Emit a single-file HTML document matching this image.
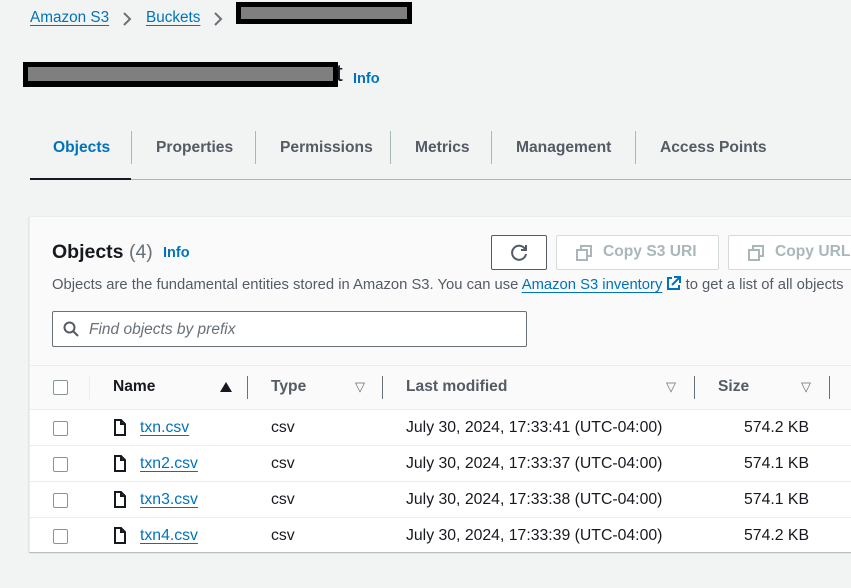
<!DOCTYPE html>
<html><head><meta charset="utf-8"><style>
*{margin:0;padding:0;box-sizing:border-box}
body{width:851px;height:588px;overflow:hidden;background:#f2f3f3;font-family:"Liberation Sans",sans-serif;color:#16191f;position:relative}
.a{position:absolute;white-space:nowrap}
.link{color:#0073bb;text-decoration:underline;text-underline-offset:3px}
.tab{position:absolute;top:139px;font-size:15.6px;font-weight:bold;color:#545b64}
.sep{position:absolute;top:131px;width:1px;height:33px;background:#aab7b8}
.cb{position:absolute;left:53px;width:15px;height:15px;border:1px solid #879596;border-radius:2px;background:#fff}
.row{position:absolute;left:30px;width:821px;height:36px;border-top:1px solid #eaeded;background:#fff;font-size:15.8px}
.row span{position:absolute;top:9px}
.hs{position:absolute;top:376px;width:1px;height:23px;background:#687078}
.tri{position:absolute;top:382px;width:0;height:0;border-left:6px solid transparent;border-right:6px solid transparent}
.btn{position:absolute;top:235px;height:35px;border:1px solid #d5dbdb;border-radius:2px;background:#fff;color:#aab7b8;font-weight:bold;font-size:15.6px}
.hd{position:absolute;top:378px;font-size:15.6px;font-weight:bold;color:#545b64}
</style></head><body>
<div class="a link" style="left:30px;top:9px;font-size:15.3px">Amazon S3</div>
<svg class="a" style="left:121px;top:11px" width="12" height="16"><path d="M3 2L9 8L3 14" fill="none" stroke="#687078" stroke-width="2"/></svg>
<div class="a link" style="left:146px;top:9px;font-size:15.3px">Buckets</div>
<svg class="a" style="left:212px;top:11px" width="12" height="16"><path d="M3 2L9 8L3 14" fill="none" stroke="#687078" stroke-width="2"/></svg>
<div class="a" style="left:236px;top:2px;width:176px;height:22px;background:#000"><div style="margin:5px;height:12px;background:#7f7f80"></div></div>
<div class="a" style="left:23px;top:62px;width:315px;height:25px;background:#000"><div style="margin:5px;height:14px;background:#7f7f80"></div></div>
<div class="a" style="left:336px;top:60px;font-size:24px">t</div>
<div class="a" style="left:353px;top:71px;font-size:14.5px;font-weight:bold;color:#0073bb">Info</div>

<div class="tab" style="left:53px;color:#0073bb">Objects</div>
<div class="tab" style="left:156px">Properties</div>
<div class="tab" style="left:280px">Permissions</div>
<div class="tab" style="left:415px">Metrics</div>
<div class="tab" style="left:516px">Management</div>
<div class="tab" style="left:660px">Access Points</div>
<div class="sep" style="left:131px"></div><div class="sep" style="left:255px"></div><div class="sep" style="left:390px"></div><div class="sep" style="left:491px"></div><div class="sep" style="left:635px"></div>
<div class="a" style="left:30px;top:179px;width:821px;height:1px;background:#aab7b8"></div>
<div class="a" style="left:30px;top:178px;width:101px;height:2px;background:#16191f"></div>

<div class="a" style="left:29px;top:216px;width:830px;height:336px;background:#fafafa;border:1px solid #eaeded;box-shadow:0 1px 1px #aab7b8"></div>
<div class="a" style="left:52px;top:241px;font-size:19.5px;font-weight:bold">Objects <span style="font-weight:normal;color:#687078">(4)</span></div>
<div class="a" style="left:163px;top:245px;font-size:14.5px;font-weight:bold;color:#0073bb">Info</div>
<div class="a" style="left:491px;top:235px;width:56px;height:35px;border:1px solid #545b64;border-radius:2px;background:#fff">
<svg width="54" height="33" viewBox="0 0 54 33"><path d="M33 13 A7 7 0 1 0 34 18" fill="none" stroke="#545b64" stroke-width="2"/><path d="M34 9 V14 H29" fill="none" stroke="#545b64" stroke-width="2"/></svg></div>
<div class="btn" style="left:556px;width:163px"><svg class="a" style="left:19px;top:9px" width="16" height="16"><rect x="5" y="1" width="10" height="10" fill="none" stroke="#aab7b8" stroke-width="2"/><rect x="1" y="5" width="10" height="10" fill="#fff" stroke="#aab7b8" stroke-width="2"/></svg><span class="a" style="left:46px;top:7px">Copy S3 URI</span></div>
<div class="btn" style="left:728px;width:140px"><svg class="a" style="left:19px;top:9px" width="16" height="16"><rect x="5" y="1" width="10" height="10" fill="none" stroke="#aab7b8" stroke-width="2"/><rect x="1" y="5" width="10" height="10" fill="#fff" stroke="#aab7b8" stroke-width="2"/></svg><span class="a" style="left:46px;top:7px">Copy URL</span></div>
<div class="a" style="left:52px;top:276px;font-size:14.8px;color:#545b64">Objects are the fundamental entities stored in Amazon S3. You can use <span class="link">Amazon S3 inventory</span> <svg width="15" height="15" style="vertical-align:-2px"><path d="M6 2H2V13H13V9" fill="none" stroke="#0073bb" stroke-width="2"/><path d="M8 1H14V7M14 1L6 9" fill="none" stroke="#0073bb" stroke-width="2"/></svg> to get a list of all objects</div>
<div class="a" style="left:52px;top:311px;width:475px;height:36px;border:1px solid #687078;border-radius:2px;background:#fff">
<svg class="a" style="left:10px;top:9px" width="16" height="16"><circle cx="6.5" cy="6.5" r="5" fill="none" stroke="#545b64" stroke-width="2"/><path d="M10 10L15 15" stroke="#545b64" stroke-width="2"/></svg>
<span class="a" style="left:36px;top:9px;font-size:15.5px;font-style:italic;color:#687078">Find objects by prefix</span></div>

<div class="a" style="left:30px;top:365px;width:821px;height:1px;background:#eaeded"></div>
<div class="cb" style="top:380px"></div>
<div class="a" style="left:89px;top:376px;width:1px;height:23px;background:#eaeded"></div>
<div class="hd" style="left:113px;color:#16191f">Name</div>
<div class="tri" style="left:220px;border-bottom:10px solid #16191f"></div>
<div class="hs" style="left:247px"></div>
<div class="hd" style="left:271px">Type</div>
<div class="a" style="left:355px;top:379px;font-size:13px;color:#687078">▽</div>
<div class="hs" style="left:382px"></div>
<div class="hd" style="left:406px">Last modified</div>
<div class="a" style="left:666px;top:379px;font-size:13px;color:#687078">▽</div>
<div class="hs" style="left:694px"></div>
<div class="hd" style="left:718px">Size</div>
<div class="a" style="left:801px;top:379px;font-size:13px;color:#687078">▽</div>
<div class="hs" style="left:829px"></div>

<div class="row" style="top:409px"><div class="cb" style="left:23px;top:11px"></div><svg class="a" style="left:83px;top:9px" width="14" height="18"><path d="M2 1H8L12 5V16H2Z" fill="none" stroke="#16191f" stroke-width="2"/><path d="M8 1V5H12" fill="none" stroke="#16191f" stroke-width="2"/></svg><span class="link" style="left:110px">txn.csv</span><span style="left:241px">csv</span><span style="left:376px">July 30, 2024, 17:33:41 (UTC-04:00)</span><span style="left:714px">574.2 KB</span></div>
<div class="row" style="top:445px"><div class="cb" style="left:23px;top:11px"></div><svg class="a" style="left:83px;top:9px" width="14" height="18"><path d="M2 1H8L12 5V16H2Z" fill="none" stroke="#16191f" stroke-width="2"/><path d="M8 1V5H12" fill="none" stroke="#16191f" stroke-width="2"/></svg><span class="link" style="left:110px">txn2.csv</span><span style="left:241px">csv</span><span style="left:376px">July 30, 2024, 17:33:37 (UTC-04:00)</span><span style="left:714px">574.1 KB</span></div>
<div class="row" style="top:481px"><div class="cb" style="left:23px;top:11px"></div><svg class="a" style="left:83px;top:9px" width="14" height="18"><path d="M2 1H8L12 5V16H2Z" fill="none" stroke="#16191f" stroke-width="2"/><path d="M8 1V5H12" fill="none" stroke="#16191f" stroke-width="2"/></svg><span class="link" style="left:110px">txn3.csv</span><span style="left:241px">csv</span><span style="left:376px">July 30, 2024, 17:33:38 (UTC-04:00)</span><span style="left:714px">574.1 KB</span></div>
<div class="row" style="top:517px;height:35px"><div class="cb" style="left:23px;top:11px"></div><svg class="a" style="left:83px;top:9px" width="14" height="18"><path d="M2 1H8L12 5V16H2Z" fill="none" stroke="#16191f" stroke-width="2"/><path d="M8 1V5H12" fill="none" stroke="#16191f" stroke-width="2"/></svg><span class="link" style="left:110px">txn4.csv</span><span style="left:241px">csv</span><span style="left:376px">July 30, 2024, 17:33:39 (UTC-04:00)</span><span style="left:714px">574.2 KB</span></div>
</body></html>
